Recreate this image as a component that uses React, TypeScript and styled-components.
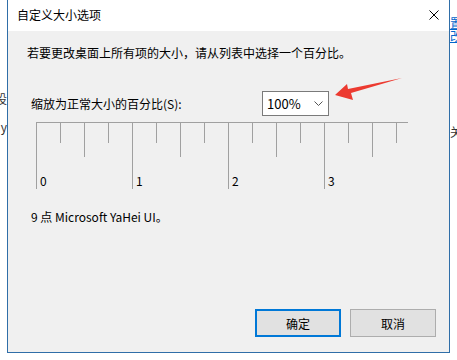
import styled, { createGlobalStyle } from "styled-components";

const GlobalStyle = createGlobalStyle`
  html, body {
    margin: 0;
    padding: 0;
    background: #ffffff;
  }
  body {
    font-family: "Noto Sans CJK SC", "Noto Sans", sans-serif;
    font-size: 12px;
    color: #000;
  }
`;

const Page = styled.div`
  display: flex;
  width: 457px;
  height: 360px;
  overflow: hidden;
  background: #fff;
`;

const Strip = styled.div<{ $side: "left" | "right" }>`
  width: 7px;
  flex: none;
  overflow: hidden;
  display: flex;
  flex-direction: column;
  align-items: ${(p) => (p.$side === "left" ? "flex-end" : "flex-start")};
  font-size: 12px;
  line-height: 13px;
  white-space: nowrap;
`;

const Fragment = styled.span<{ $top: number; $link?: boolean }>`
  margin-top: ${(p) => p.$top}px;
  color: ${(p) => (p.$link ? "#0066cc" : "#333")};
  text-decoration: ${(p) => (p.$link ? "underline" : "none")};
`;

const Dialog = styled.div`
  position: relative;
  width: 443px;
  height: 353px;
  flex: none;
  box-sizing: border-box;
  border: 1px solid #2f6ea8;
  border-top: none;
  display: flex;
  flex-direction: column;
  background: #f0f0f0;
`;

const TitleBar = styled.div`
  height: 31px;
  flex: none;
  background: #fff;
  display: flex;
  align-items: center;
  justify-content: space-between;
  padding: 0 10px 2px 9px;
  box-sizing: border-box;
`;

const Title = styled.span`
  font-size: 12px;
  line-height: 16px;
`;

const CloseGlyph = styled.svg`
  width: 10px;
  height: 10px;
`;

const Body = styled.div`
  flex: 1;
  display: flex;
  flex-direction: column;
  padding: 14px 13px 15px 19px;
`;

const Intro = styled.div`
  line-height: 16px;
`;

const ScaleRow = styled.div`
  display: grid;
  grid-template-columns: 231px 67px;
  align-items: center;
  margin-top: 30px;
  padding-left: 4px;
  height: 25px;
`;

const Label = styled.span`
  line-height: 16px;
  padding-top: 1px;
`;

const Select = styled.div`
  height: 25px;
  box-sizing: border-box;
  border: 1px solid #7a7a7a;
  background: #fff;
  display: flex;
  align-items: center;
  justify-content: space-between;
  padding: 0 5px 0 4px;
  font-size: 13px;
`;

const Ruler = styled.svg`
  display: block;
  margin-top: 5px;
  margin-left: 8px;
  overflow: visible;
`;

const FontNote = styled.div`
  margin-top: 18px;
  padding-left: 4px;
  line-height: 16px;
`;

const Footer = styled.div`
  margin-top: auto;
  display: flex;
  justify-content: flex-end;
  gap: 9px;
`;

const Button = styled.button<{ $primary?: boolean }>`
  width: 86px;
  height: 28px;
  box-sizing: border-box;
  background: #e1e1e1;
  border: ${(p) => (p.$primary ? "2px solid #0078d7" : "1px solid #adadad")};
  font-family: inherit;
  font-size: 12px;
  color: #000;
  padding: 0;
`;

const Arrow = styled.svg`
  position: absolute;
  left: 0;
  top: 0;
  pointer-events: none;
`;

const ticks = Array.from({ length: 16 }, (_, i) => i);

const App = () => {
  return (
    <>
      <GlobalStyle />
      <Page>
        <Strip $side="left">
          <Fragment $top={92}>设</Fragment>
          <Fragment $top={15}>y</Fragment>
        </Strip>
        <Dialog>
          <TitleBar>
            <Title>自定义大小选项</Title>
            <CloseGlyph viewBox="0 0 10 10">
              <path d="M0.5 0.5 L9.5 9.5 M9.5 0.5 L0.5 9.5" stroke="#000" strokeWidth="1" fill="none" />
            </CloseGlyph>
          </TitleBar>
          <Body>
            <Intro>若要更改桌面上所有项的大小，请从列表中选择一个百分比。</Intro>
            <ScaleRow>
              <Label>缩放为正常大小的百分比(S):</Label>
              <Select>
                <span>100%</span>
                <svg width="9" height="5" viewBox="0 0 9 5">
                  <path d="M0.5 0.5 L4.5 4.5 L8.5 0.5" stroke="#555" fill="none" />
                </svg>
              </Select>
            </ScaleRow>
            <Ruler width="376" height="70" viewBox="0 0 376 70">
              <line x1="1" y1="1.5" x2="373" y2="1.5" stroke="#a0a0a0" />
              {ticks.map((i) => {
                const x = 1.5 + i * 24;
                const len = i % 4 === 0 ? 67 : i % 2 === 0 ? 35 : 21;
                return <line key={i} x1={x} y1="1" x2={x} y2={1 + len} stroke="#a0a0a0" />;
              })}
              {[0, 1, 2, 3].map((n) => (
                <text key={n} x={5 + n * 96} y="65" fontSize="12" fill="#000">
                  {n}
                </text>
              ))}
            </Ruler>
            <FontNote>9 点 Microsoft YaHei UI。</FontNote>
            <Footer>
              <Button $primary>确定</Button>
              <Button>取消</Button>
            </Footer>
          </Body>
          <Arrow width="443" height="120" viewBox="7 0 443 120">
            <polygon points="334,95 346,84 347,89 401,78 350,93 352,100" fill="#ec3a30" />
          </Arrow>
        </Dialog>
        <Strip $side="right">
          <Fragment $top={16} $link>置</Fragment>
          <Fragment $top={0} $link>改</Fragment>
          <Fragment $top={83}>关</Fragment>
        </Strip>
      </Page>
    </>
  );
};

export default App;
